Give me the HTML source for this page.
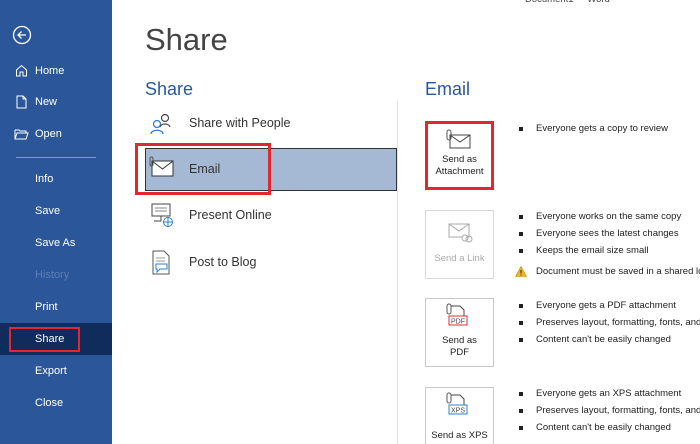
<!DOCTYPE html>
<html style="width:700px;height:444px;overflow:hidden"><head><meta charset="utf-8"><style>
*{margin:0;padding:0;box-sizing:border-box}
body{width:700px;height:444px;overflow:hidden;background:#fff;font-family:"Liberation Sans",sans-serif;position:relative}
.a{position:absolute;white-space:nowrap}
#side{position:absolute;left:0;top:0;width:112px;height:444px;background:#2b579a}
.si{position:absolute;left:35px;color:#fff;font-size:11px}
.bl{position:absolute;left:519px;width:4px;height:4px;background:#222}
.bt{position:absolute;left:536px;font-size:9.5px;color:#222;white-space:nowrap}
.box{position:absolute;left:425px;width:69px;height:69px;border:1px solid #c8c8c8;background:#fff;text-align:center;font-size:9.5px;color:#222;line-height:12px}
.li{position:absolute;left:189px;font-size:12.5px;color:#333}
</style></head><body>
<div id="side">
<svg class="a" style="left:12px;top:25px" width="20" height="20" viewBox="0 0 20 20"><circle cx="10" cy="10" r="8.5" fill="none" stroke="#fff" stroke-width="1.3"/><path d="M14 10H6M9.5 6.5L6 10l3.5 3.5" fill="none" stroke="#fff" stroke-width="1.3"/></svg>
<svg class="a" style="left:15px;top:64px" width="13" height="13" viewBox="0 0 13 13"><path d="M1.5 12V6L6.5 1.5 11.5 6V12H8V8H5V12Z" fill="none" stroke="#fff"/></svg>
<div class="si" style="top:65px">Home</div>
<svg class="a" style="left:16px;top:95px" width="11" height="14" viewBox="0 0 11 14"><path d="M1 1H7L10 4V13H1Z M7 1V4H10" fill="none" stroke="#fff"/></svg>
<div class="si" style="top:96px">New</div>
<svg class="a" style="left:14px;top:128px" width="15" height="12" viewBox="0 0 15 12"><path d="M1 2H5L6 3H12V5M1 2V11H12L14 5H3L1 11" fill="none" stroke="#fff"/></svg>
<div class="si" style="top:128px">Open</div>
<div class="a" style="left:16px;top:157px;width:80px;height:1px;background:#7f9bc6"></div>
<div class="si" style="top:173px">Info</div>
<div class="si" style="top:205px">Save</div>
<div class="si" style="top:237px">Save As</div>
<div class="si" style="top:269px;color:#5a7db5">History</div>
<div class="si" style="top:301px">Print</div>
<div class="a" style="left:0;top:323px;width:112px;height:32px;background:#0f2c5c"></div>
<div class="a" style="left:9px;top:327px;width:71px;height:25px;border:2px solid #e0282e"></div>
<div class="si" style="top:333px">Share</div>
<div class="si" style="top:365px">Export</div>
<div class="si" style="top:397px">Close</div>
</div>

<div class="a" style="left:525px;top:-6px;font-size:9.5px;color:#444">Document1 &nbsp;-&nbsp; Word</div>
<div class="a" style="left:145px;top:22px;font-size:31px;color:#444">Share</div>
<div class="a" style="left:145px;top:79px;font-size:18px;color:#2b579a">Share</div>
<div class="a" style="left:425px;top:79px;font-size:18px;color:#2b579a">Email</div>
<div class="a" style="left:397px;top:101px;width:1px;height:343px;background:#e1e1e1"></div>

<svg class="a" style="left:148px;top:112px" width="28" height="24" viewBox="0 0 28 24"><circle cx="9" cy="12" r="3.5" fill="none" stroke="#2f7fd1" stroke-width="1.3"/><path d="M3 22c0-5 12-5 12 0" fill="none" stroke="#2f7fd1" stroke-width="1.3"/><circle cx="17" cy="6" r="3.5" fill="none" stroke="#444" stroke-width="1.2"/><path d="M12 15c1-4 9-4 10 0" fill="none" stroke="#444" stroke-width="1.2"/></svg>
<div class="li" style="top:116px">Share with People</div>

<div class="a" style="left:145px;top:148px;width:252px;height:43px;background:#a5b9d5;border:1px solid #333"></div>
<div class="a" style="left:135px;top:143px;width:136px;height:52px;border:3px solid #e0282e"></div>
<svg class="a" style="left:148px;top:155px" width="28" height="24" viewBox="0 0 28 24"><rect x="4" y="6" width="21" height="15" fill="#fff" stroke="#333"/><path d="M4 6l10.5 8L25 6" fill="none" stroke="#333"/><rect x="2" y="2" width="3" height="9" rx="1.5" fill="none" stroke="#555"/></svg>
<div class="li" style="top:162px">Email</div>

<svg class="a" style="left:148px;top:202px" width="28" height="26" viewBox="0 0 28 26"><rect x="4" y="2" width="18" height="12" fill="#fff" stroke="#444"/><path d="M7 6h12M7 9h12" stroke="#888"/><path d="M13 14v5H6" stroke="#444" fill="none"/><circle cx="20" cy="20" r="4.5" fill="#fff" stroke="#2f7fd1"/><path d="M15.5 20h9M20 15.5v9" stroke="#2f7fd1"/></svg>
<div class="li" style="top:208px">Present Online</div>
<svg class="a" style="left:152px;top:250px" width="20" height="26" viewBox="0 0 20 26"><path d="M1 1H12L17 6V24H1Z" fill="#fff" stroke="#555"/><path d="M4 8h9M4 11h9" stroke="#999"/><path d="M4 14h11v5H8l-3 3v-3H4Z" fill="#fff" stroke="#2f7fd1"/></svg>
<div class="li" style="top:255px">Post to Blog</div>

<div class="box" style="top:121px;border:3px solid #e0282e;padding-top:30px">Send as<br>Attachment</div>
<svg class="a" style="left:445px;top:129px" width="28" height="22" viewBox="0 0 28 22"><rect x="5" y="6" width="20" height="13" fill="#fff" stroke="#444"/><path d="M5 6l10 7 10-7" fill="none" stroke="#444"/><rect x="2" y="1" width="4" height="10" rx="2" fill="none" stroke="#555"/></svg>
<div class="bl" style="top:127px"></div><div class="bt" style="top:123px">Everyone gets a copy to review</div>

<div class="box" style="top:210px;border-color:#d8d8d8;color:#aaa;padding-top:42px">Send a Link</div>
<svg class="a" style="left:448px;top:222px" width="26" height="22" viewBox="0 0 26 22"><rect x="1" y="2" width="20" height="13" fill="#fff" stroke="#aaa"/><path d="M1 2l10 7 10-7" fill="none" stroke="#aaa"/><circle cx="17" cy="16" r="3" fill="#fff" stroke="#aaa"/><circle cx="21" cy="17" r="3" fill="none" stroke="#aaa"/></svg>
<div class="bl" style="top:215px"></div><div class="bt" style="top:211px">Everyone works on the same copy</div>
<div class="bl" style="top:232px"></div><div class="bt" style="top:228px">Everyone sees the latest changes</div>
<div class="bl" style="top:249px"></div><div class="bt" style="top:245px">Keeps the email size small</div>
<svg class="a" style="left:515px;top:266px" width="12" height="11" viewBox="0 0 12 11"><path d="M6 0.5L11.5 10.5H0.5Z" fill="#f0b429" stroke="#c78a00" stroke-width=".6"/><path d="M6 4v3.5M6 8.5v1" stroke="#222"/></svg>
<div class="bt" style="top:266px">Document must be saved in a shared lo</div>

<div class="box" style="top:298px;padding-top:36px">Send as<br>PDF</div>
<svg class="a" style="left:446px;top:302px" width="26" height="30" viewBox="0 0 26 30"><rect x="1" y="2" width="4" height="10" rx="2" fill="none" stroke="#555"/><path d="M5 4H14L18 8V14" fill="none" stroke="#444"/><rect x="3" y="14" width="18" height="9" fill="#fff" stroke="#e0282e"/><text x="12" y="21.5" font-size="7" text-anchor="middle" fill="#444" font-family="Liberation Sans">PDF</text></svg>
<div class="bl" style="top:304px"></div><div class="bt" style="top:300px">Everyone gets a PDF attachment</div>
<div class="bl" style="top:321px"></div><div class="bt" style="top:317px">Preserves layout, formatting, fonts, and</div>
<div class="bl" style="top:338px"></div><div class="bt" style="top:334px">Content can't be easily changed</div>

<div class="box" style="top:387px;height:57px;border-bottom:none;padding-top:42px">Send as XPS</div>
<svg class="a" style="left:446px;top:391px" width="26" height="30" viewBox="0 0 26 30"><rect x="1" y="2" width="4" height="10" rx="2" fill="none" stroke="#555"/><path d="M5 4H14L18 8V14" fill="none" stroke="#444"/><rect x="3" y="14" width="18" height="9" fill="#fff" stroke="#2f7fd1"/><text x="12" y="21.5" font-size="7" text-anchor="middle" fill="#444" font-family="Liberation Sans">XPS</text></svg>
<div class="bl" style="top:392px"></div><div class="bt" style="top:388px">Everyone gets an XPS attachment</div>
<div class="bl" style="top:409px"></div><div class="bt" style="top:405px">Preserves layout, formatting, fonts, and</div>
<div class="bl" style="top:426px"></div><div class="bt" style="top:422px">Content can't be easily changed</div>
</body></html>
